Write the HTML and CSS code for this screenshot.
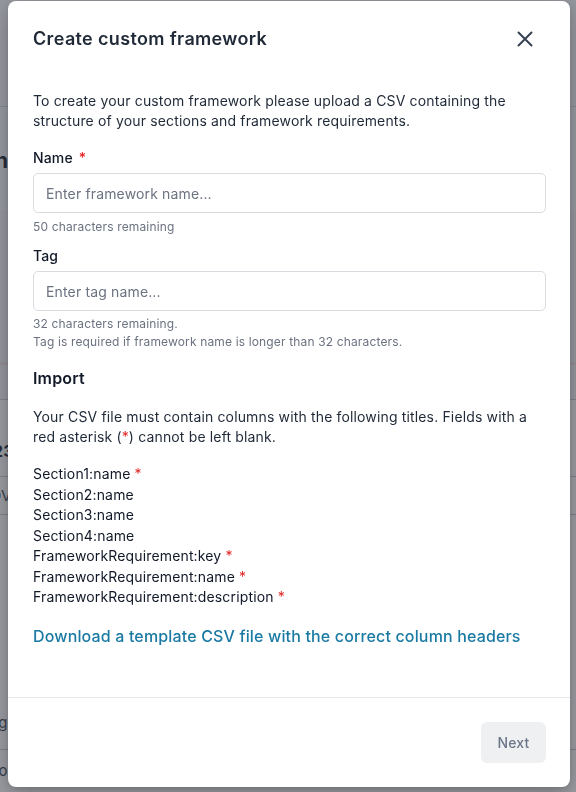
FILE: index.html
```html
<!DOCTYPE html>
<html lang="en">
<head>
<meta charset="utf-8">
<title>Create custom framework</title>
<link rel="stylesheet" href="styles.css">
</head>
<body>
<div class="page">
  <div class="bg-top"></div>
  <div class="bg-head"><div class="bg-clip"><span class="bg-title">Pipeline</span></div></div>
  <div class="bg-mid"></div>
  <div class="bg-accent"></div>
  <div class="bg-row bg-h35"></div>
  <div class="bg-row bg-h77"><span class="bg-small">Info</span><span class="bg-num">123</span></div>
  <div class="bg-row bg-h38"><span class="bg-text">ADV</span></div>
  <div class="bg-row bg-h220 bg-dark"><span class="bg-text bg-low">Tag</span></div>
  <div class="bg-row bg-h40"><span class="bg-text">Info</span></div>
</div>

<div class="overlay"></div>

<div class="modal" role="dialog" aria-labelledby="dlg-title">
  <div class="modal-header">
    <h2 id="dlg-title" class="modal-title">Create custom framework</h2>
    <button class="close-btn" aria-label="Close">
      <svg viewBox="0 0 24 24" width="24" height="24"><path d="M5.5 5.5L18.5 18.5M18.5 5.5L5.5 18.5" stroke="#374151" stroke-width="2" stroke-linecap="round" fill="none"/></svg>
    </button>
  </div>
  <div class="modal-body">
    <p class="intro">To create your custom framework please upload a CSV containing the structure of your sections and framework requirements.</p>

    <label class="field-label label-first" for="fw-name">Name <span class="req">*</span></label>
    <input id="fw-name" class="text-input" type="text" placeholder="Enter framework name...">
    <p class="helper">50 characters remaining</p>

    <label class="field-label label-tag" for="fw-tag">Tag</label>
    <input id="fw-tag" class="text-input" type="text" placeholder="Enter tag name...">
    <p class="helper helper-multi">32 characters remaining.<br>Tag is required if framework name is longer than 32 characters.</p>

    <h3 class="section-title">Import</h3>
    <p class="import-text">Your CSV file must contain columns with the following titles. Fields with a red asterisk (<span class="req">*</span>) cannot be left blank.</p>

    <ul class="columns">
      <li>Section1:name <span class="req">*</span></li>
      <li>Section2:name</li>
      <li>Section3:name</li>
      <li>Section4:name</li>
      <li>FrameworkRequirement:key <span class="req">*</span></li>
      <li>FrameworkRequirement:name <span class="req">*</span></li>
      <li>FrameworkRequirement:description <span class="req">*</span></li>
    </ul>

    <a class="download" href="#">Download a template CSV file with the correct column headers</a>
  </div>
  <div class="modal-footer">
    <button class="next-btn" disabled>Next</button>
  </div>
</div>
</body>
</html>
```

FILE: styles.css
```css
* { box-sizing: border-box; }

html, body {
  margin: 0;
  padding: 0;
  width: 576px;
  height: 792px;
  overflow: hidden;
}

body {
  font-family: Inter, "Noto Sans", "Liberation Sans", sans-serif;
  background: #f3f4f6;
  color: #1f2937;
  letter-spacing: 0.15px;
}

/* background page (mostly hidden under the dialog) */
.page {
  display: flex;
  flex-direction: column;
  width: 576px;
  height: 792px;
  background: #ffffff;
}
.bg-top { height: 107px; background: #f7f7f8; border-bottom: 1px solid #d6d7da; }
.bg-head { height: 103px; background: #fbfbfc; display: flex; align-items: center; }
.bg-clip {
  width: 21px;
  display: flex;
  justify-content: flex-end;
  white-space: nowrap;
  margin-top: 4px;
}
.bg-title {
  font-size: 21px;
  font-weight: 700;
  color: #111827;
}
.bg-mid { height: 152px; background: #f6f6f7; }
.bg-accent { height: 3px; background: #f3e3e3; }
.bg-row { border-bottom: 1px solid #c9cbcf; display: flex; flex-direction: column; justify-content: center; background: #fff; }
.bg-h35 { height: 35px; background: #f6f6f7; }
.bg-h77 { height: 77px; }
.bg-h38 { height: 38px; }
.bg-h220 { height: 235px; }
.bg-h40 { height: 40px; border-bottom: none; }
.bg-dark { background: #ffffff; }
.bg-small { font-size: 12px; color: #4b5563; margin-left: -22px; }
.bg-num { font-size: 16px; font-weight: 700; color: #111827; margin-left: -14px; margin-top: 10px; }
.bg-text { font-size: 15px; color: #374151; margin-left: -20px; }
.bg-low { margin-top: 180px; margin-left: -19px; }

.overlay {
  position: fixed;
  inset: 0;
  background: rgba(60, 63, 74, 0.52);
}

/* dialog */
.modal {
  position: fixed;
  top: 1px;
  left: 8px;
  width: 562px;
  background: #ffffff;
  border-radius: 8px;
  box-shadow: 0 8px 24px rgba(0, 0, 0, 0.22), 0 2px 6px rgba(0, 0, 0, 0.12);
  display: flex;
  flex-direction: column;
}

.modal-header {
  display: flex;
  align-items: center;
  justify-content: space-between;
  padding: 24px 24px 0 25px;
  height: 52px;
}

.modal-title {
  margin: 0;
  font-size: 18px;
  line-height: 28px;
  font-weight: 600;
  color: #1f2937;
  letter-spacing: 0.35px;
}

.close-btn {
  width: 24px;
  height: 24px;
  padding: 0;
  margin-right: 9px;
  border: none;
  background: transparent;
  display: flex;
  align-items: center;
  justify-content: center;
  cursor: pointer;
}

.modal-body {
  display: flex;
  flex-direction: column;
  padding: 38px 24px 49px 25px;
}

.intro {
  margin: 0;
  font-size: 14px;
  line-height: 20px;
  color: #1f2937;
}

.field-label {
  display: block;
  font-size: 14px;
  line-height: 20px;
  font-weight: 500;
  color: #111827;
}
.label-first { margin-top: 17px; }
.label-tag { margin-top: 11px; }

.req { color: #e02424; }
.field-label .req { margin-left: 2px; }

.text-input {
  display: block;
  width: 100%;
  height: 40px;
  margin-top: 5px;
  padding: 0 12px;
  border: 1px solid #d8dbe0;
  border-radius: 5px;
  font-family: inherit;
  font-size: 14px;
  letter-spacing: 0.15px;
  color: #111827;
  background: #fff;
  outline: none;
}
.text-input::placeholder { color: #6b7280; }

.helper {
  margin: 6px 0 0;
  font-size: 12px;
  line-height: 16px;
  color: #6b7280;
}
.helper-multi {
  margin-top: 4px;
  line-height: 18px;
}

.section-title {
  margin: 15px 0 0;
  font-size: 16px;
  line-height: 24px;
  font-weight: 600;
  color: #111827;
}

.import-text {
  margin: 17px 0 0;
  font-size: 14px;
  line-height: 20px;
  color: #1f2937;
}

.columns {
  list-style: none;
  margin: 17px 0 0;
  padding: 0;
  font-size: 14px;
  line-height: 20.5px;
  color: #111827;
}

.download {
  margin-top: 16.5px;
  font-size: 16px;
  line-height: 24px;
  font-weight: 500;
  color: #1a7aa3;
  text-decoration: none;
}

.modal-footer {
  display: flex;
  justify-content: flex-end;
  padding: 24px;
  border-top: 1px solid #e5e7eb;
}

.next-btn {
  width: 65px;
  height: 41px;
  border: none;
  border-radius: 6px;
  background: #eef0f2;
  color: #6b7789;
  font-family: inherit;
  font-size: 14px;
  font-weight: 500;
  letter-spacing: 0.15px;
}
```
